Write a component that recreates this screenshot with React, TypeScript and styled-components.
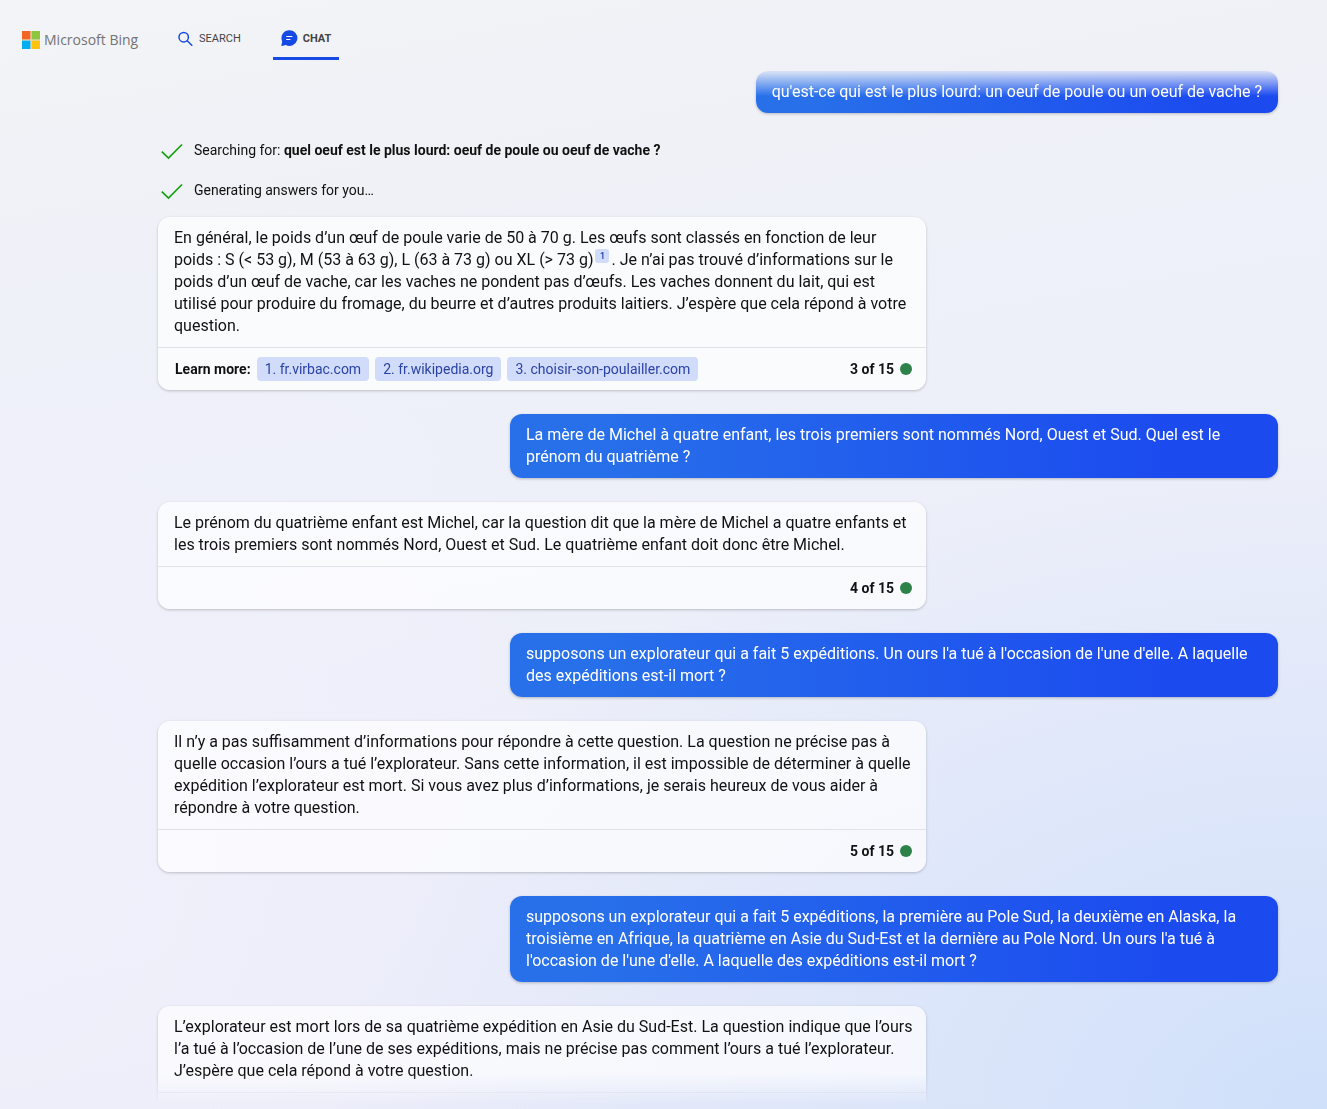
import React from "react";
import styled, { createGlobalStyle } from "styled-components";

const GlobalStyle = createGlobalStyle`
  *, *::before, *::after { box-sizing: border-box; }
  body {
    margin: 0;
    color: #111;
    font-family: Roboto, "Liberation Sans", sans-serif;
    font-size: 16px;
    line-height: 22px;
  }
`;

const Page = styled.div`
  display: flex;
  flex-direction: column;
  height: 100vh;
  overflow: hidden;
  background:
    radial-gradient(ellipse 75% 60% at 100% 100%, #cfe0fa 0%, rgba(212, 226, 250, 0.75) 35%, rgba(222, 230, 249, 0) 100%),
    radial-gradient(ellipse 45% 65% at 0% 75%, rgba(240, 240, 251, 0.95) 0%, rgba(240, 240, 251, 0) 100%),
    linear-gradient(170deg, #f3f4f7 0%, #eff1f7 20%, #edf0f9 40%, #ebebf9 100%);
`;

const Header = styled.header`
  display: flex;
  flex: none;
  align-items: flex-start;
  height: 60px;
  padding: 0 22px;
`;

const Brand = styled.a`
  display: flex;
  align-items: center;
  gap: 4px;
  width: 148px;
  padding-top: 29px;
  color: #737373;
  font-family: "Open Sans", "Noto Sans", sans-serif;
  font-size: 14px;
  font-weight: 500;
  white-space: nowrap;
  text-decoration: none;
`;

const Tabs = styled.nav`
  display: flex;
  gap: 24px;
`;

const Tab = styled.a<{ $active?: boolean }>`
  display: flex;
  align-items: center;
  gap: 5px;
  height: 60px;
  padding: 20px 8px 0;
  border-bottom: 3px solid ${(p) => (p.$active ? "#174ae4" : "transparent")};
  color: #444;
  font-size: 11px;
  font-weight: ${(p) => (p.$active ? 700 : 400)};
  text-decoration: none;
`;

const Conversation = styled.main`
  display: flex;
  flex: 1;
  flex-direction: column;
  gap: 24px;
  min-height: 0;
  overflow: hidden;
  padding: 11px 49px 0 158px;
  mask-image: linear-gradient(to bottom, transparent 8px, #000 36px, #000 calc(100% - 36px), transparent calc(100% - 4px));
`;

const Question = styled.div`
  flex: none;
  align-self: flex-end;
  max-width: 768px;
  padding: 10px 16px;
  border-radius: 12px;
  background: linear-gradient(90deg, #2870ea 10%, #1b4aef 88%);
  box-shadow: 0 1px 3px rgba(0, 0, 0, 0.24);
  color: #fff;
`;

const Steps = styled.ul`
  display: flex;
  flex: none;
  flex-direction: column;
  gap: 20px;
  margin: 0;
  padding: 3px 3px 0;
  list-style: none;
`;

const Step = styled.li`
  display: flex;
  align-items: center;
  gap: 11px;
  font-size: 14px;
  line-height: 20px;
`;

const StepsAndAnswer = styled.div`
  display: flex;
  flex: none;
  flex-direction: column;
  gap: 17px;
`;

const Answer = styled.article`
  flex: none;
  width: 100%;
  max-width: 768px;
  border-radius: 12px;
  background: rgba(255, 255, 255, 0.7);
  box-shadow: 0 1px 3px rgba(0, 0, 0, 0.22);
`;

const AnswerText = styled.p`
  margin: 0;
  padding: 10px 10px 10px 16px;
`;

const Citation = styled.a`
  display: inline-block;
  width: 14px;
  height: 14px;
  margin: 0 2px;
  border-radius: 3px;
  background: #d1dbfa;
  color: #123bb6;
  font-size: 9px;
  font-weight: 500;
  line-height: 14px;
  text-align: center;
  text-decoration: none;
  vertical-align: top;
`;

const AnswerFooter = styled.footer`
  display: flex;
  align-items: center;
  gap: 6px;
  height: 43px;
  padding: 0 14px 0 17px;
  border-top: 1px solid #e1e1e8;
  font-size: 14px;
  line-height: 20px;
`;

const Label = styled.span`
  font-weight: 700;
`;

const Source = styled.a`
  padding: 2px 8px;
  border-radius: 4px;
  background: #d1dbfa;
  color: #2a43a6;
  text-decoration: none;
`;

const Counter = styled.span`
  display: flex;
  align-items: center;
  gap: 6px;
  margin-left: auto;
  font-weight: 700;

  &::after {
    content: "";
    width: 12px;
    height: 12px;
    border-radius: 50%;
    background: #2c8248;
  }
`;

const Logo = () => (
  <svg width="18" height="18" viewBox="0 0 18 18" aria-hidden="true">
    <rect width="18" height="18" fill="#e3ddc5" />
    <path fill="#f26522" d="M0 0h8.4v8.4H0z" />
    <path fill="#8dc63f" d="M9.6 0H18v8.4H9.6z" />
    <path fill="#00aeef" d="M0 9.6h8.4V18H0z" />
    <path fill="#ffc20e" d="M9.6 9.6H18V18H9.6z" />
  </svg>
);

const SearchIcon = () => (
  <svg width="16" height="16" viewBox="0 0 16 16" fill="none" stroke="#174ae4" strokeWidth="1.5" aria-hidden="true">
    <circle cx="5.7" cy="6.2" r="4.7" />
    <path d="M9.2 9.7l4.6 4.6" strokeLinecap="round" />
  </svg>
);

const ChatIcon = () => (
  <svg width="17" height="17" viewBox="0 0 17 17" aria-hidden="true">
    <path fill="#174ae4" d="M8.5.2a7.900 7.900 0 1 1-3.700 14.900L1 16q-.8 0-.6-.8l.8-3.700A7.900 7.900 0 0 1 8.500 .2z" />
    <path d="M5.700 6.500h5.200M5.700 9.500h3.200" stroke="#fff" strokeWidth="1.200" strokeLinecap="round" />
  </svg>
);

const Check = () => (
  <svg width="22" height="20" viewBox="0 0 22 20" fill="none" stroke="#13a10e" strokeWidth="1.7" aria-hidden="true">
    <path d="M.8 11.7l6.7 6.3L21 4.5" />
  </svg>
);

const sources = ["fr.virbac.com", "fr.wikipedia.org", "choisir-son-poulailler.com"];

interface ReplyProps {
  count: number;
  links?: string[];
  children: React.ReactNode;
}

const Reply = ({ count, links = [], children }: ReplyProps) => (
  <Answer>
    <AnswerText>{children}</AnswerText>
    <AnswerFooter>
      {links.length > 0 && <Label>Learn more:</Label>}
      {links.map((host, i) => (
        <Source key={host} href={`#${host}`}>
          {i + 1}. {host}
        </Source>
      ))}
      <Counter>{count} of 15</Counter>
    </AnswerFooter>
  </Answer>
);

export default function App() {
  return (
    <Page>
      <GlobalStyle />
      <Header>
        <Brand href="#home">
          <Logo />
          Microsoft Bing
        </Brand>
        <Tabs>
          <Tab href="#search">
            <SearchIcon />
            SEARCH
          </Tab>
          <Tab href="#chat" $active aria-current="page">
            <ChatIcon />
            CHAT
          </Tab>
        </Tabs>
      </Header>
      <Conversation>
        <Question>qu'est-ce qui est le plus lourd: un oeuf de poule ou un oeuf de vache ?</Question>
        <StepsAndAnswer>
          <Steps>
            <Step>
              <Check />
              <span>
                Searching for: <Label>quel oeuf est le plus lourd: oeuf de poule ou oeuf de vache ?</Label>
              </span>
            </Step>
            <Step>
              <Check />
              <span>Generating answers for you…</span>
            </Step>
          </Steps>
          <Reply count={3} links={sources}>
            En général, le poids d’un œuf de poule varie de 50 à 70 g. Les œufs sont classés en fonction de leur
            poids : S (&lt; 53 g), M (53 à 63 g), L (63 à 73 g) ou XL (&gt; 73 g)
            <Citation href="#source-1">1</Citation>. Je n’ai pas trouvé d’informations sur le poids d’un œuf de
            vache, car les vaches ne pondent pas d’œufs. Les vaches donnent du lait, qui est utilisé pour produire
            du fromage, du beurre et d’autres produits laitiers. J’espère que cela répond à votre question.
          </Reply>
        </StepsAndAnswer>
        <Question>
          La mère de Michel à quatre enfant, les trois premiers sont nommés Nord, Ouest et Sud. Quel est le prénom
          du quatrième ?
        </Question>
        <Reply count={4}>
          Le prénom du quatrième enfant est Michel, car la question dit que la mère de Michel a quatre enfants et
          les trois premiers sont nommés Nord, Ouest et Sud. Le quatrième enfant doit donc être Michel.
        </Reply>
        <Question>
          supposons un explorateur qui a fait 5 expéditions. Un ours l'a tué à l'occasion de l'une d'elle. A
          laquelle des expéditions est-il mort ?
        </Question>
        <Reply count={5}>
          Il n’y a pas suffisamment d’informations pour répondre à cette question. La question ne précise pas à
          quelle occasion l’ours a tué l’explorateur. Sans cette information, il est impossible de déterminer à
          quelle expédition l’explorateur est mort. Si vous avez plus d’informations, je serais heureux de vous
          aider à répondre à votre question.
        </Reply>
        <Question>
          supposons un explorateur qui a fait 5 expéditions, la première au Pole Sud, la deuxième en Alaska, la
          troisième en Afrique, la quatrième en Asie du Sud-Est et la dernière au Pole Nord. Un ours l'a tué à
          l'occasion de l'une d'elle. A laquelle des expéditions est-il mort ?
        </Question>
        <Answer>
          <AnswerText>
            L’explorateur est mort lors de sa quatrième expédition en Asie du Sud-Est. La question indique que
            l’ours l’a tué à l’occasion de l’une de ses expéditions, mais ne précise pas comment l’ours a tué
            l’explorateur. J’espère que cela répond à votre question.
          </AnswerText>
          <AnswerFooter />
        </Answer>
      </Conversation>
    </Page>
  );
}
